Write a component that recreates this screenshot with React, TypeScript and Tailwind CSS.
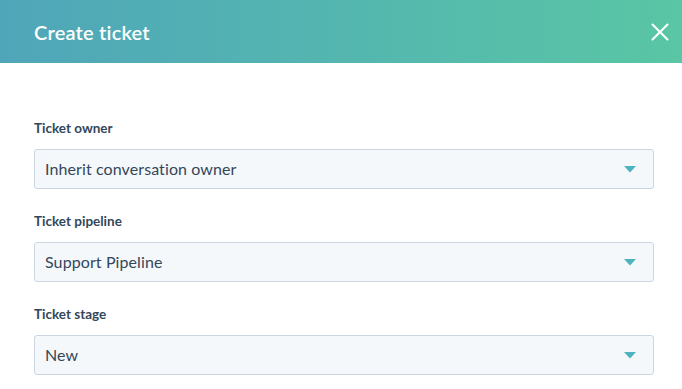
import React from "react";

function Field({ label, value }: { label: string; value: string }) {
  return (
    <div className="flex flex-col">
      <div className="text-[13.5px] font-bold text-[#33475b] leading-[18px] mb-[12px]">{label}</div>
      <div className="flex items-center justify-between h-[40px] rounded-[3px] border border-[#cbd6e2] bg-[#f5f8fa] pl-[10px] pr-[17px]">
        <span className="text-[16px] text-[#33475b] leading-[20px] tracking-[0.1px]">{value}</span>
        <svg width="12" height="7" viewBox="0 0 12 7">
          <path d="M0 0 L12 0 L6 6.5 Z" fill="#4fb3bf" />
        </svg>
      </div>
    </div>
  );
}

export default function App() {
  return (
    <div className="w-[682px] h-[389px] bg-white overflow-hidden" style={{ fontFamily: "Lato, 'Noto Sans', sans-serif" }}>
      <div className="h-[63px] flex items-center justify-between pl-[34px] pr-[13px] bg-gradient-to-r from-[#4fa6b9] to-[#5ac6a4]">
        <span className="text-white text-[20px] font-semibold tracking-[0.2px]">Create ticket</span>
        <svg width="18" height="18" viewBox="0 0 18 18">
          <path d="M1.5 1.5 L16.5 16.5 M16.5 1.5 L1.5 16.5" stroke="white" strokeWidth="2" strokeLinecap="round" />
        </svg>
      </div>
      <div className="pt-[56px] flex flex-col gap-[23px] ml-[34px] w-[620px]">
        <Field label="Ticket owner" value="Inherit conversation owner" />
        <Field label="Ticket pipeline" value="Support Pipeline" />
        <Field label="Ticket stage" value="New" />
      </div>
    </div>
  );
}
